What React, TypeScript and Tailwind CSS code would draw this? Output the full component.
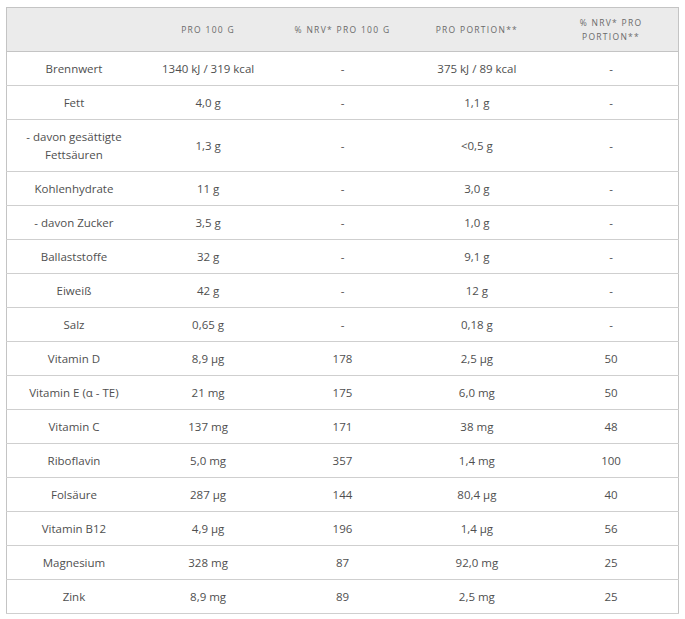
import React from "react";

const rows: [string, string, string, string, string][] = [
  ["Brennwert", "1340 kJ / 319 kcal", "-", "375 kJ / 89 kcal", "-"],
  ["Fett", "4,0 g", "-", "1,1 g", "-"],
  ["- davon gesättigte Fettsäuren", "1,3 g", "-", "<0,5 g", "-"],
  ["Kohlenhydrate", "11 g", "-", "3,0 g", "-"],
  ["- davon Zucker", "3,5 g", "-", "1,0 g", "-"],
  ["Ballaststoffe", "32 g", "-", "9,1 g", "-"],
  ["Eiweiß", "42 g", "-", "12 g", "-"],
  ["Salz", "0,65 g", "-", "0,18 g", "-"],
  ["Vitamin D", "8,9 µg", "178", "2,5 µg", "50"],
  ["Vitamin E (α - TE)", "21 mg", "175", "6,0 mg", "50"],
  ["Vitamin C", "137 mg", "171", "38 mg", "48"],
  ["Riboflavin", "5,0 mg", "357", "1,4 mg", "100"],
  ["Folsäure", "287 µg", "144", "80,4 µg", "40"],
  ["Vitamin B12", "4,9 µg", "196", "1,4 µg", "56"],
  ["Magnesium", "328 mg", "87", "92,0 mg", "25"],
  ["Zink", "8,9 mg", "89", "2,5 mg", "25"],
];

const headers = ["", "PRO 100 G", "% NRV* PRO 100 G", "PRO PORTION**", "% NRV* PRO PORTION**"];

export default function App() {
  return (
    <div className="w-[685px] h-[619px] bg-white pt-[7px] pl-[6px]" style={{ fontFamily: '"Open Sans", "Noto Sans", sans-serif' }}>
      <table className="w-[673px] table-fixed border-collapse border border-[#c4c4c4]">
        <thead>
          <tr className="bg-[#ebebeb] h-[44px] border-b border-[#c4c4c4]">
            {headers.map((h, i) => (
              <th
                key={i}
                className={`font-normal text-[8.5px] tracking-[1.3px] leading-[14px] text-[#6a6a6a] text-center align-middle ${i === 4 ? "px-[28px]" : "px-1"}`}
              >
                {h}
              </th>
            ))}
          </tr>
        </thead>
        <tbody>
          {rows.map((r, ri) => (
            <tr key={ri} className="border-b border-[#cfcfcf]">
              {r.map((c, ci) => (
                <td
                  key={ci}
                  className="text-[11.5px] leading-[18px] text-[#4f4f4f] text-center align-middle py-[7.5px] px-[12px]"
                >
                  {c}
                </td>
              ))}
            </tr>
          ))}
        </tbody>
      </table>
    </div>
  );
}
